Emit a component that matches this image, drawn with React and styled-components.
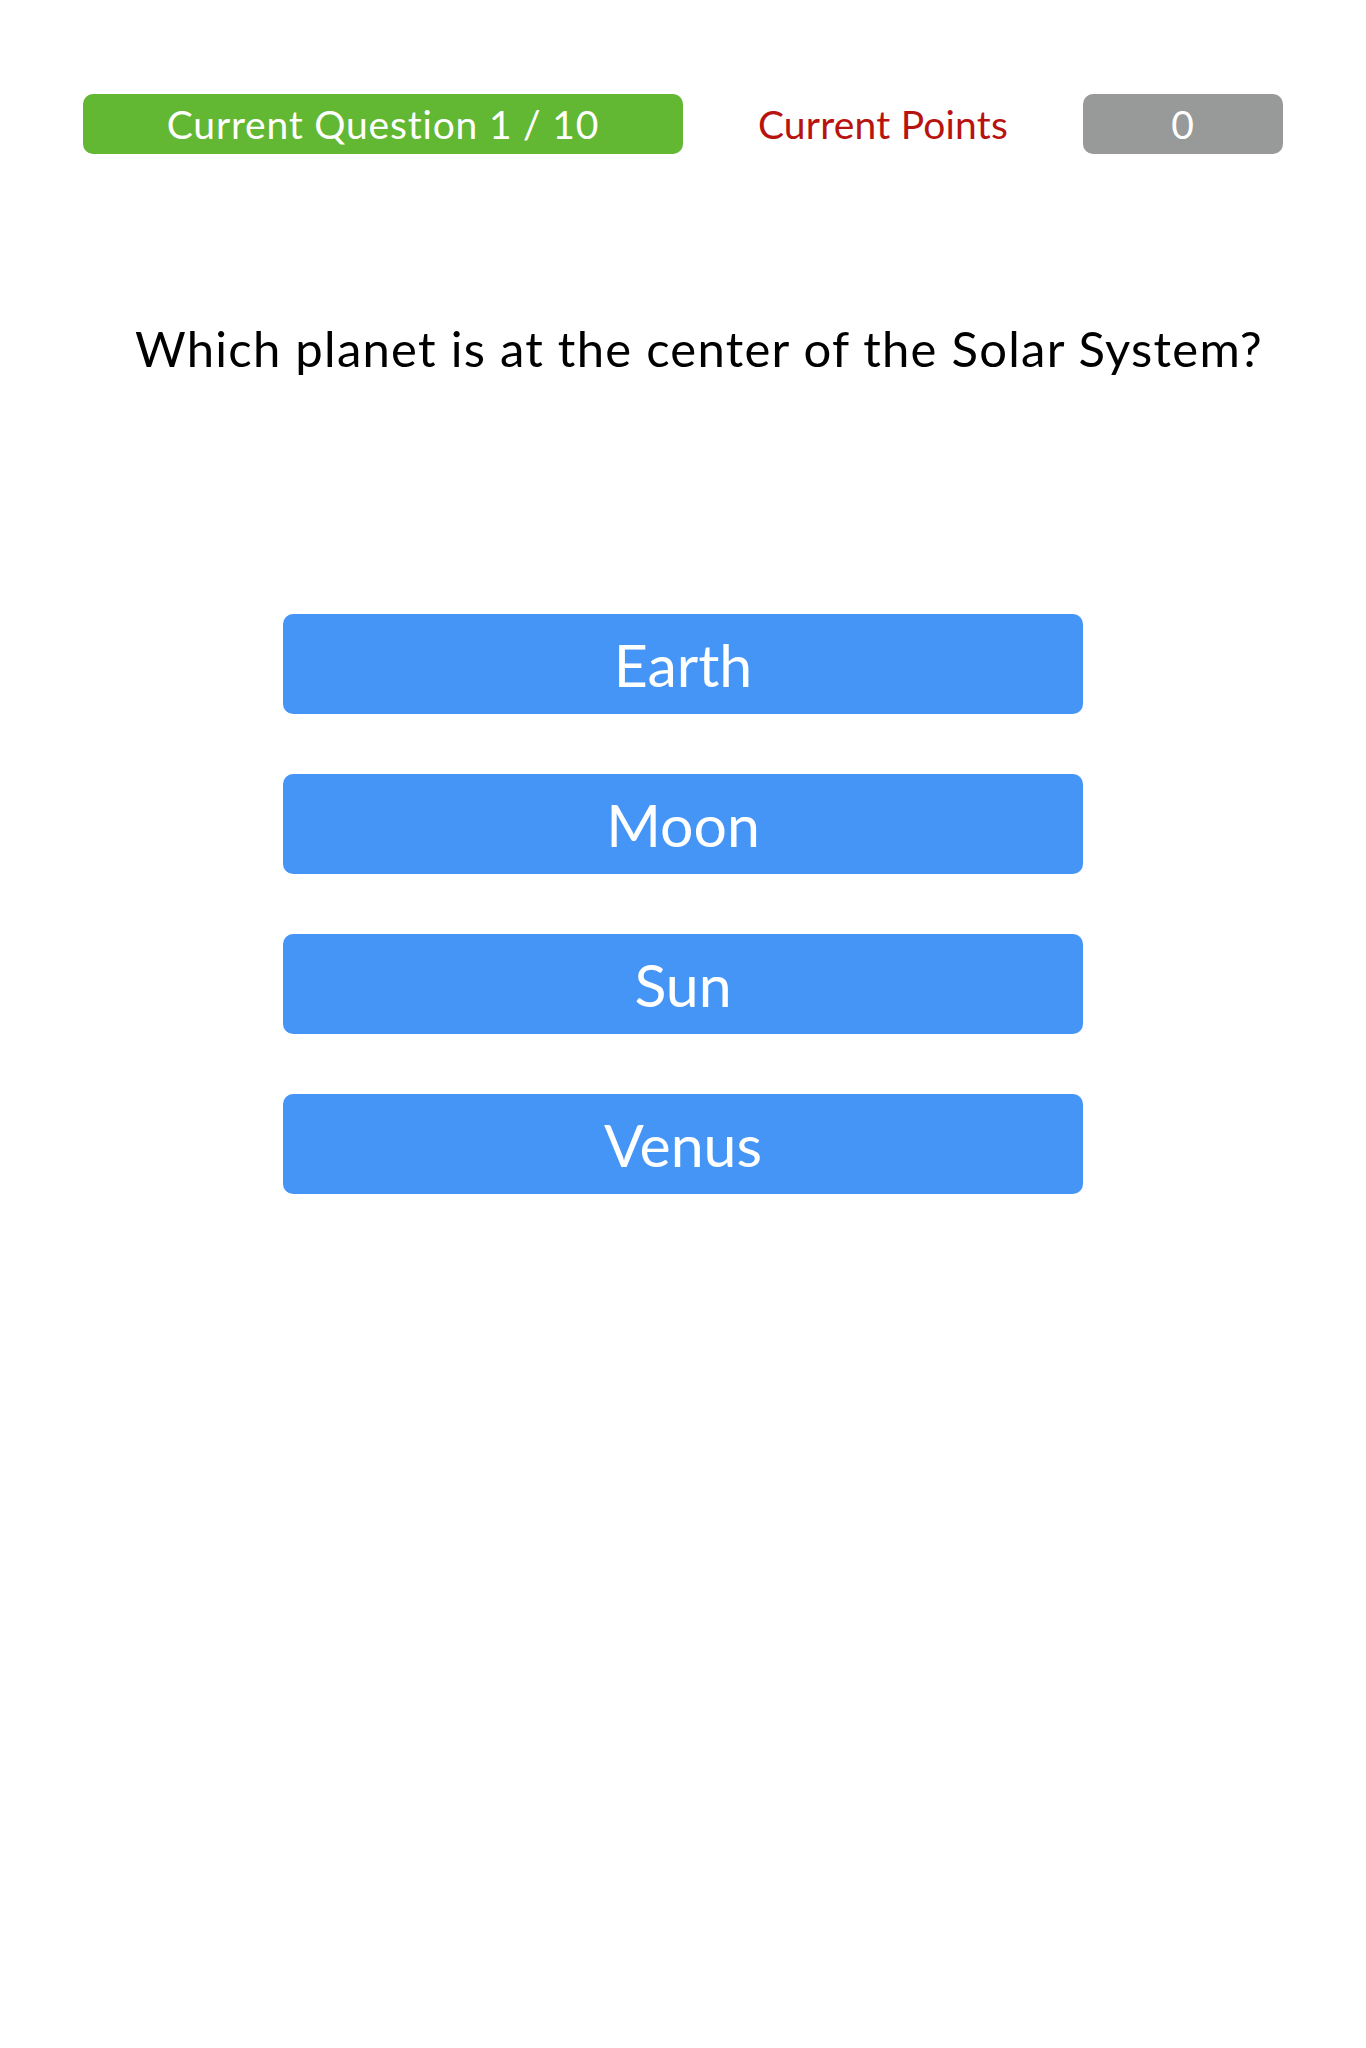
import React from "react";
import styled, { createGlobalStyle } from "styled-components";

const Global = createGlobalStyle`
  html, body { margin: 0; padding: 0; background: #ffffff; }
  body { font-family: Lato, "Open Sans", sans-serif; }
`;

const Page = styled.div`
  width: 1366px;
  min-height: 2048px;
  box-sizing: border-box;
  padding: 94px 83px 0;
  display: flex;
  flex-direction: column;
  align-items: center;
`;

const TopBar = styled.div`
  width: 100%;
  display: grid;
  grid-template-columns: 600px 1fr 200px;
  align-items: center;
  height: 60px;
`;

const Pill = styled.div`
  height: 60px;
  border-radius: 10px;
  background: ${(p) => p.$bg};
  color: #ffffff;
  display: flex;
  align-items: center;
  justify-content: center;
  font-size: 39px;
  font-weight: 400;
  letter-spacing: 0.8px;
`;

const PointsLabel = styled.div`
  text-align: center;
  color: #b8130f;
  font-size: 39px;
  letter-spacing: 0.2px;
`;

const Question = styled.h1`
  margin: 166px 0 0;
  padding-left: 32px;
  font-size: 49px;
  line-height: 56px;
  font-weight: 400;
  color: #000000;
  text-align: center;
  letter-spacing: 1.25px;
`;

const Answers = styled.div`
  margin-top: 238px;
  display: flex;
  flex-direction: column;
  gap: 60px;
`;

const AnswerButton = styled.button`
  width: 800px;
  height: 100px;
  border: none;
  border-radius: 10px;
  background: #4495f6;
  color: #ffffff;
  font-family: Lato, "Open Sans", sans-serif;
  font-size: 59px;
  font-weight: 400;
  display: flex;
  align-items: center;
  justify-content: center;
  padding: 0;
  cursor: pointer;
`;

const answers = ["Earth", "Moon", "Sun", "Venus"];

export default function App() {
  return (
    <>
      <Global />
      <Page>
        <TopBar>
          <Pill $bg="#62b733">Current Question 1 / 10</Pill>
          <PointsLabel>Current Points</PointsLabel>
          <Pill $bg="#979a99">0</Pill>
        </TopBar>
        <Question>Which planet is at the center of the Solar System?</Question>
        <Answers>
          {answers.map((a) => (
            <AnswerButton key={a}>{a}</AnswerButton>
          ))}
        </Answers>
      </Page>
    </>
  );
}
